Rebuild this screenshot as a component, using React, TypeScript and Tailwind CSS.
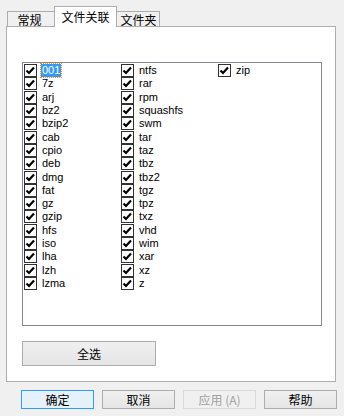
import React from 'react'
import { clsx } from 'clsx'

const formats = [
  '001', '7z', 'arj', 'bz2', 'bzip2', 'cab', 'cpio', 'deb', 'dmg', 'fat', 'gz', 'gzip', 'hfs', 'iso', 'lha', 'lzh', 'lzma',
  'ntfs', 'rar', 'rpm', 'squashfs', 'swm', 'tar', 'taz', 'tbz', 'tbz2', 'tgz', 'tpz', 'txz', 'vhd', 'wim', 'xar', 'xz', 'z',
  'zip',
]

const cjk = "font-['Noto_Sans_CJK_SC',sans-serif]"

const CheckBox: React.FC = () => (
  <svg width="13" height="13" viewBox="0 0 13 13" className="shrink-0">
    <rect x="0.5" y="0.5" width="12" height="12" fill="#fff" stroke="#333" />
    <path d="M2.5 6.5 L5 9 L10 3.5" fill="none" stroke="#000" strokeWidth="2.2" />
  </svg>
)

const Tab: React.FC<{ label: string; active?: boolean; className?: string }> = ({ label, active, className }) => (
  <div
    className={clsx(
      'flex items-center justify-center border border-[#acacac] text-[12px] text-black',
      cjk,
      active
        ? 'relative z-10 -mx-[2px] h-[21px] border-b-0 bg-white pb-px'
        : 'h-[16px] bg-[#f0f0f0] pt-px',
      className
    )}
  >
    {label}
  </div>
)

const Button: React.FC<{ label: string; focused?: boolean; disabled?: boolean; className?: string }> = ({
  label,
  focused,
  disabled,
  className,
}) => (
  <button
    className={clsx(
      'flex items-center justify-center border text-[12px] leading-none',
      cjk,
      focused && 'border-[#3399ff] bg-[#e5f1fb] text-black',
      disabled && 'border-[#d9d9d9] bg-[#f0f0f0] text-[#a0a0a0]',
      !focused && !disabled && 'border-[#adadad] bg-gradient-to-b from-[#f0f0f0] to-[#e5e5e5] text-black',
      className
    )}
  >
    {label}
  </button>
)

export default function App() {
  return (
    <div className="flex h-[416px] w-[344px] flex-col bg-[#f0f0f0] font-['Liberation_Sans',sans-serif]">
      {/* Tab strip */}
      <div className="flex h-[27px] items-end pl-[7px]">
        <Tab label="常规" className="w-[49px] pr-[4px]" />
        <Tab label="文件关联" active className="w-[63px]" />
        <Tab label="文件夹" className="w-[45px] pl-[2px]" />
      </div>

      {/* Panel */}
      <div className="-mt-px ml-[6px] flex h-[356px] w-[330px] flex-col border border-[#acacac] bg-white px-[15px]">
        <div className="mt-[35px] h-[264px] w-[300px] border border-[#828790] bg-white pl-px pt-px">
          <div className="grid grid-flow-col grid-rows-[repeat(17,13.3px)] auto-cols-[97px]">
            {formats.map((f, i) => (
              <div key={f} className="flex items-center gap-[4px] text-[11px] leading-none text-black">
                <CheckBox />
                <span
                  className={clsx(
                    'px-px py-[1px]',
                    i === 0 && 'bg-[#3399ff] text-white outline-1 outline-dotted outline-[#ff8c00]'
                  )}
                >
                  {f}
                </span>
              </div>
            ))}
          </div>
        </div>

        <div className="mt-[15px]">
          <Button label="全选" className="h-[25px] w-[134px]" />
        </div>
      </div>

      {/* Dialog buttons */}
      <div className="mt-[8px] flex gap-[8px] pl-[21px]">
        <Button label="确定" focused className="h-[19px] w-[73px]" />
        <Button label="取消" className="h-[19px] w-[73px]" />
        <Button label="应用 (A)" disabled className="h-[19px] w-[73px]" />
        <Button label="帮助" className="h-[19px] w-[73px]" />
      </div>
    </div>
  )
}
